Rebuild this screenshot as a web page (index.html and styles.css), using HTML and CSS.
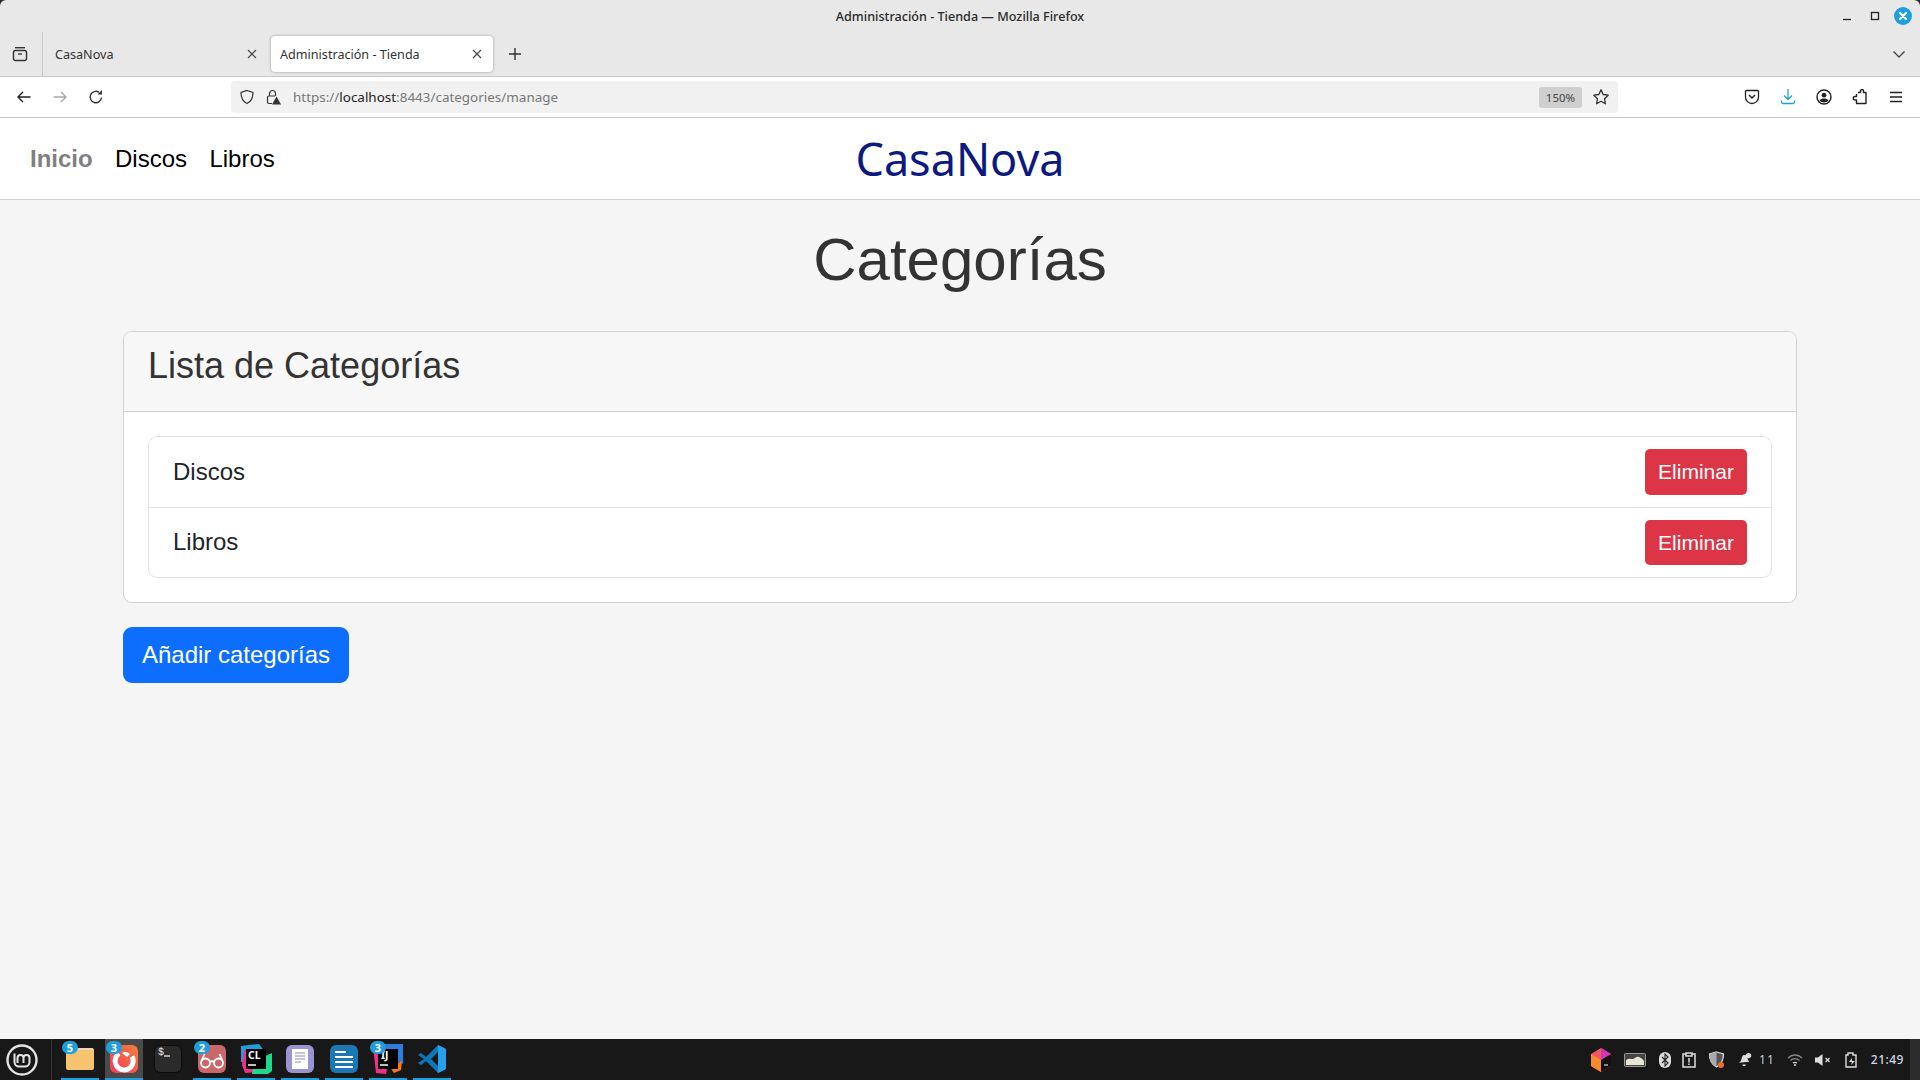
FILE: index.html
```html
<!DOCTYPE html>
<html lang="es">
<head>
    <meta charset="UTF-8" />
    <title>Administración - Tienda</title>
    <link rel="stylesheet" href="styles.css">
</head>
<body>
<div class="window">
    <div class="titlebar">
        <span class="window-title">Administración - Tienda — Mozilla Firefox</span>
        <div class="window-buttons">
            <svg width="14" height="14" viewBox="0 0 14 14"><path d="M3 10.500h8" stroke="#222" stroke-width="1.300"/></svg>
            <svg width="12" height="12" viewBox="0 0 12 12"><rect x="2.500" y="2.500" width="7" height="7" fill="none" stroke="#222" stroke-width="1.300"/></svg>
            <svg class="close-button" width="18" height="18" viewBox="0 0 18 18"><circle cx="9" cy="9" r="9" fill="#1f9ede"/><path d="M6 6l6 6M12 6l-6 6" stroke="#fff" stroke-width="2.200" stroke-linecap="round"/></svg>
        </div>
    </div>

    <div class="tabstrip">
        <div class="tab-view">
            <svg width="18" height="18" viewBox="0 0 18 18" fill="none" stroke="#333" stroke-width="1.400"><path d="M4 2.700h10"/><rect x="2.500" y="5.500" width="13" height="10" rx="2"/><path d="M7 9h4"/></svg>
        </div>
        <div class="tab">
            <span class="tab-label">CasaNova</span>
            <svg class="tab-close" width="12" height="12" viewBox="0 0 12 12"><path d="M2 2l8 8M10 2l-8 8" stroke="#444" stroke-width="1.100"/></svg>
        </div>
        <div class="tab tab-active">
            <span class="tab-label">Administración - Tienda</span>
            <svg class="tab-close" width="12" height="12" viewBox="0 0 12 12"><path d="M2 2l8 8M10 2l-8 8" stroke="#444" stroke-width="1.100"/></svg>
        </div>
        <svg class="tab-new" width="14" height="14" viewBox="0 0 14 14"><path d="M7 1v12M1 7h12" stroke="#333" stroke-width="1.400"/></svg>
        <svg class="tab-list" width="16" height="16" viewBox="0 0 16 16"><path d="M2.500 5.500L8 11l5.500-5.500" fill="none" stroke="#444" stroke-width="1.300"/></svg>
    </div>

    <div class="toolbar">
        <svg class="tool-first" width="16" height="16" viewBox="0 0 16 16" fill="none" stroke="#222" stroke-width="1.400"><path d="M14.500 8H2M7 3L2 8l5 5"/></svg>
        <svg class="tool" width="16" height="16" viewBox="0 0 16 16" fill="none" stroke="#a8a8a8" stroke-width="1.400"><path d="M1.500 8H14M9 3l5 5-5 5"/></svg>
        <svg class="tool" width="16" height="16" viewBox="0 0 16 16" fill="none" stroke="#333" stroke-width="1.400"><path d="M13.500 8.500A5.700 5.700 0 1 1 11 3.300"/><path d="M14 1v4.500H9.500z" fill="#333" stroke="none"/></svg>
        <div class="urlbar">
            <svg width="16" height="16" viewBox="0 0 16 16" fill="none" stroke="#333" stroke-width="1.200"><path d="M8 1.500l6 2c0 5-1.500 9-6 11-4.500-2-6-6-6-11z"/></svg>
            <svg class="lock" width="16" height="16" viewBox="0 0 16 16"><path d="M4.500 7V4.500a3 3 0 0 1 6 0V7M7 14.500H4a1.500 1.500 0 0 1-1.500-1.500V8.500A1.500 1.500 0 0 1 4 7h6" fill="none" stroke="#333" stroke-width="1.200"/><path d="M11.500 7.500L16 15.500H7z" fill="#333"/></svg>
            <span class="url"><span class="url-dim">https://</span><span class="url-host">localhost</span><span class="url-dim">:8443/categories/manage</span></span>
            <span class="zoom-badge">150%</span>
            <svg width="18" height="18" viewBox="0 0 18 18"><path d="M9 1.800l2.200 4.700 5 .7-3.700 3.500.9 5.100L9 13.300l-4.400 2.500.9-5.100L1.800 7.200l5-.7z" fill="none" stroke="#333" stroke-width="1.300" stroke-linejoin="round"/></svg>
        </div>
        <div class="toolbar-right">
            <svg width="16" height="16" viewBox="0 0 16 16" fill="none" stroke="#222" stroke-width="1.300"><path d="M2.500 1.500h11A1 1 0 0 1 14.500 2.500V8a6.500 6.500 0 0 1-13 0V2.500a1 1 0 0 1 1-1z"/><path d="M5 6l3 3 3-3" stroke-width="1.500"/></svg>
            <svg width="16" height="16" viewBox="0 0 16 16" fill="none" stroke="#1f9ede" stroke-width="1.300"><path d="M8 0v10M4 6.500L8 10.500l4-4M1.500 11.500v1.500a1.500 1.500 0 0 0 1.500 1.500h10a1.500 1.500 0 0 0 1.500-1.500v-1.500"/></svg>
            <svg width="16" height="16" viewBox="0 0 16 16"><circle cx="8" cy="8" r="7" fill="none" stroke="#222" stroke-width="1.400"/><circle cx="8" cy="6.200" r="2.400" fill="#222"/><path d="M3.500 11.500c1-1.500 2.700-2 4.500-2s3.500.5 4.500 2c-1 1.300-2.700 2-4.500 2s-3.500-.7-4.500-2z" fill="#222"/></svg>
            <svg width="16" height="16" viewBox="0 0 16 16" fill="none" stroke="#222" stroke-width="1.400" stroke-linejoin="round"><path d="M6 3.500h2.500V2a1.500 1.500 0 0 1 3 0v1.500h2.500V14.500H4.500V11H3a1.700 1.700 0 0 1 0-3.500h1.500V5"/></svg>
            <svg width="16" height="16" viewBox="0 0 16 16"><path d="M2 3.500h12M2 8h12M2 12.500h12" stroke="#222" stroke-width="1.400"/></svg>
        </div>
    </div>

    <nav class="site-nav">
        <div class="nav-links">
            <a class="nav-link nav-current">Inicio</a>
            <a class="nav-link">Discos</a>
            <a class="nav-link">Libros</a>
        </div>
        <div class="brand">CasaNova</div>
    </nav>

    <main class="page">
        <h1>Categorías</h1>
        <section class="card">
            <header class="card-header"><h2>Lista de Categorías</h2></header>
            <div class="card-body">
                <ul class="list-group">
                    <li class="list-item"><span>Discos</span><button class="btn btn-danger">Eliminar</button></li>
                    <li class="list-item"><span>Libros</span><button class="btn btn-danger">Eliminar</button></li>
                </ul>
            </div>
        </section>
        <button class="btn btn-primary">Añadir categorías</button>
    </main>

    <footer class="taskbar">
        <div class="start">
            <svg width="32" height="32" viewBox="0 0 32 32" fill="none" stroke="#e4e4e4"><circle cx="16" cy="16" r="14.500" stroke-width="2.400"/><path d="M8.500 9.500v8.500a4.500 4.500 0 0 0 4.500 4.500h6a4.500 4.500 0 0 0 4.500-4.500v-4a3 3 0 0 0-6 0v5M17.500 14a3 3 0 0 0-6 0v5" stroke-width="2"/></svg>
        </div>
        <div class="launcher">
            <div class="launch-item running">
                <span class="count">5</span>
                <svg width="28" height="22" viewBox="0 0 28 22"><path d="M0 2a2 2 0 0 1 2-2h24a2 2 0 0 1 2 2v6H0z" fill="#ead9b4"/><path d="M0 3h10l2-1h16v18a2 2 0 0 1-2 2H2a2 2 0 0 1-2-2z" fill="#f6c36f"/></svg>
            </div>
            <div class="launch-item running active">
                <span class="count">3</span>
                <svg width="28" height="28" viewBox="0 0 28 28"><defs><linearGradient id="fox" x1="1" y1="0" x2="0" y2="1"><stop offset="0" stop-color="#f7803a"/><stop offset="1" stop-color="#f0385c"/></linearGradient></defs><rect width="28" height="28" rx="6" fill="url(#fox)"/><path d="M9 8.500a9 9 0 1 0 13 3" fill="none" stroke="#fff" stroke-width="5"/><path d="M12 8c3-2 6-1 8 1l-3 3z" fill="#fff"/></svg>
            </div>
            <div class="launch-item">
                <svg width="28" height="28" viewBox="0 0 28 28"><rect x=".5" y=".5" width="27" height="27" rx="6" fill="#2b2b2b" stroke="#0c0c0c"/><text x="4" y="10" class="term-text">$</text><path d="M10 11h6" stroke="#eee" stroke-width="1.300"/></svg>
            </div>
            <div class="launch-item running">
                <span class="count">2</span>
                <svg width="28" height="28" viewBox="0 0 28 28"><rect width="28" height="28" rx="6" fill="#c9686a"/><g fill="none" stroke="#fff" stroke-width="1.800"><circle cx="7.500" cy="18" r="4.500"/><circle cx="20.500" cy="18" r="4.500"/><path d="M12 17c1.300-1 2.700-1 4 0M3.500 16l3-7M24.500 16l-3-7"/></g></svg>
            </div>
            <div class="launch-item running">
                <svg width="32" height="32" viewBox="0 0 32 32"><path d="M1 3l18-2 6 8v10H1z" fill="#1f9ede"/><path d="M2 22l3 8 14-1 7-12-8-10H4z" fill="#f0308c"/><path d="M14 18l18-8v18l-4 3H12z" fill="#1fd98a"/><rect x="6" y="6" width="20" height="20" fill="#000"/><text x="8" y="16" class="ide-text">CL</text><path d="M8 22h8" stroke="#fff" stroke-width="1.500"/></svg>
            </div>
            <div class="launch-item running">
                <svg width="28" height="28" viewBox="0 0 28 28"><rect width="28" height="28" rx="6" fill="#9a94d2"/><rect x="6" y="4" width="16" height="20" fill="#fff"/><path d="M9 8h10M9 11h10M9 14h10M9 17h6" stroke="#8b86c4" stroke-width="1"/></svg>
            </div>
            <div class="launch-item running">
                <svg width="28" height="28" viewBox="0 0 28 28"><rect width="28" height="28" rx="6" fill="#1c78b4"/><path d="M5 7h11M5 12h18M5 17h18M5 22h18" stroke="#fff" stroke-width="2"/></svg>
            </div>
            <div class="launch-item running">
                <span class="count">3</span>
                <svg width="32" height="32" viewBox="0 0 32 32"><path d="M12 1h19v20L20 16z" fill="#2b7de0"/><path d="M1 4l18 2-5 25-10-1z" fill="#f0308c"/><path d="M18 24l12-6-1 9-7 3z" fill="#f77a1a"/><rect x="6" y="6" width="20" height="20" fill="#000"/><text x="9" y="16" class="ide-text">IJ</text><path d="M8 22h8" stroke="#fff" stroke-width="1.500"/></svg>
            </div>
            <div class="launch-item running">
                <svg width="30" height="30" viewBox="0 0 30 30"><path d="M21 1l8 4v20l-8 4L9 17l-5 4-3-2 6-4-6-4 3-2 5 4z" fill="#0f75bc"/><path d="M21 1l8 4v20l-8 4z" fill="#27a0ec"/><path d="M21 8l-7 7 7 7z" fill="#181818"/></svg>
            </div>
        </div>
        <div class="tray">
            <svg width="22" height="26" viewBox="0 0 22 26"><path d="M11 1l10 6v12l-10 6-10-6V7z" fill="#f05a5a"/><path d="M11 1l10 6-10 6z" fill="#d633b8"/><path d="M21 7v12l-10 6V13z" fill="#111"/><path d="M14 18h4" stroke="#fff"/><path d="M1 7l10 6v12l-10-6z" fill="#f78a2a"/></svg>
            <svg width="22" height="14" viewBox="0 0 22 14"><rect x=".5" y=".5" width="21" height="13" rx="1" fill="#444" stroke="#999"/><path d="M2 7c3-2 5-1 7-1s3-3 6-2 4 3 5 4v4H2z" fill="#e8e4d8"/></svg>
            <svg class="tray-bluetooth" width="12" height="16" viewBox="0 0 12 16"><rect width="12" height="16" rx="6" fill="#ddd"/><path d="M3 5l6 6-3 3V2l3 3-6 6" fill="none" stroke="#222" stroke-width="1.100"/></svg>
            <svg width="14" height="16" viewBox="0 0 14 16"><path d="M4 2H1v13h12V2h-3M4 1h6v3H4z" fill="none" stroke="#ddd" stroke-width="1.500"/><path d="M7 6v4.500M7 11.500v1.500" stroke="#ddd" stroke-width="1.500"/></svg>
            <svg width="17" height="18" viewBox="0 0 16 18"><path d="M8 1l7 2c0 6-1.500 10-7 13C2.500 13 1 9 1 3z" fill="#555" stroke="#ddd" stroke-width="1.300"/><path d="M8 1v15C2.500 13 1 9 1 3z" fill="#aaa"/><circle cx="12.500" cy="14" r="3" fill="#f26a2a"/></svg>
            <div class="tray-note">
                <svg width="16" height="16" viewBox="0 0 18 16"><path d="M2 11c3-1 3-5 4-7 1-2 4-2 5 0 1 2 1 4 3 6zM6 13a2 2 0 0 0 4 0" fill="#ddd"/><circle cx="13" cy="3" r="3" fill="#ddd"/></svg>
                <span class="tray-text">11</span>
            </div>
            <svg width="16" height="12" viewBox="0 0 16 12" fill="none" stroke="#888" stroke-width="1.300"><path d="M1 4c4-4 10-4 14 0M3.500 6.500c3-2.500 6-2.500 9 0"/><path d="M6 9c1.500-1 2.500-1 4 0" stroke="#ddd"/><circle cx="8" cy="11" r="1" fill="#ddd" stroke="none"/></svg>
            <svg width="16" height="14" viewBox="0 0 16 14"><path d="M0 4.500h3L7.500 1v12L3 9.500H0z" fill="#ddd"/><path d="M10.500 5l4 4M14.500 5l-4 4" stroke="#ddd" stroke-width="1.300"/></svg>
            <svg class="tray-battery" width="14" height="16" viewBox="0 0 14 16"><path d="M4 1h5v2h3v12H2V3h2z" fill="none" stroke="#ddd" stroke-width="1.400"/><path d="M8 6l-3 4h3l-1 3 4-4H8z" fill="#ddd"/></svg>
            <span class="clock">21:49</span>
        </div>
        <div class="show-desktop"></div>
    </footer>
</div>
</body>
</html>
```

FILE: styles.css
```css
* {
    box-sizing: border-box;
}

body {
    margin: 0;
    font-family: "Liberation Sans", Arial, sans-serif;
    background: #2a2a2a;
    overflow: hidden;
}

.window {
    display: flex;
    flex-direction: column;
    height: 100vh;
}

/* browser chrome */
.titlebar {
    height: 32px;
    background: #e8e8e8;
    display: flex;
    align-items: center;
    justify-content: center;
    position: relative;
    border-radius: 6px 6px 0 0;
}

.window-title {
    font-family: "Noto Sans", sans-serif;
    font-size: 12.600px;
    font-weight: 500;
    color: #2a2a2a;
}

.window-buttons {
    position: absolute;
    right: 8px;
    top: 7px;
    display: flex;
    align-items: center;
    gap: 15px;
}

.close-button {
    margin-left: -2px;
}

.tabstrip {
    height: 45px;
    background: #e8e8e8;
    border-bottom: 1px solid #c8c8c8;
    display: flex;
    align-items: center;
    font-family: "Noto Sans", sans-serif;
    font-size: 12.600px;
    color: #333;
}

.tab-view {
    width: 43px;
    height: 44px;
    border-right: 1px solid #c8c8c8;
    display: flex;
    align-items: center;
    padding-left: 11px;
}

.tab {
    width: 222px;
    height: 36px;
    margin-left: 1px;
    padding: 0 8px 0 11px;
    display: flex;
    align-items: center;
    justify-content: space-between;
    border-radius: 4px;
}

.tab-active {
    width: 222px;
    margin-left: 5px;
    padding-left: 9px;
    padding-right: 10px;
    background: #fff;
    box-shadow: 0 0 3px rgba(0, 0, 0, 0.35);
}

.tab-new {
    margin-left: 15px;
}

.tab-list {
    margin-left: auto;
    margin-right: 13px;
}

.toolbar {
    height: 41px;
    background: #fff;
    border-bottom: 1px solid #c8c8c8;
    display: flex;
    align-items: center;
}

.tool-first {
    margin-left: 16px;
}

.tool {
    margin-left: 20px;
}

.urlbar {
    width: 1387px;
    height: 32px;
    margin-left: 127px;
    padding: 0 8px 0 8px;
    background: #f1f1f1;
    border-radius: 4px;
    display: flex;
    align-items: center;
    font-family: "Noto Sans", sans-serif;
    font-size: 13.450px;
}

.lock {
    margin-left: 10px;
}

.url {
    margin-left: 12px;
    flex: 1;
}

.url-dim {
    color: #777;
}

.url-host {
    color: #222;
}

.zoom-badge {
    width: 43px;
    height: 21px;
    margin-right: 10px;
    background: #cfcfcf;
    border-radius: 3px;
    color: #444;
    font-size: 11.500px;
    line-height: 21px;
    text-align: center;
}

.toolbar-right {
    margin-left: auto;
    margin-right: 16px;
    display: flex;
    align-items: center;
    gap: 20px;
}

/* site */
.site-nav {
    height: 82px;
    background: #fff;
    border-bottom: 1px solid #d0d0d0;
    display: flex;
    align-items: center;
    position: relative;
    flex-shrink: 0;
}

.nav-links {
    display: flex;
    padding-left: 18.800px;
}

.nav-link {
    padding: 0 11.200px;
    font-size: 24px;
    color: #000;
}

.nav-current {
    color: #808080;
    font-weight: 700;
}

.brand {
    position: absolute;
    left: 0;
    right: 0;
    text-align: center;
    font-family: "Noto Sans", sans-serif;
    font-size: 45px;
    color: #0a1a80;
    pointer-events: none;
}

.page {
    flex: 1;
    padding: 0 123px;
    background: #f5f5f5;
}

h1 {
    margin: 24px 0 35px;
    font-size: 60px;
    font-weight: 400;
    line-height: 72px;
    text-align: center;
    color: #333;
}

.card {
    background: #fff;
    border: 1px solid #d2d2d2;
    border-radius: 9px;
    overflow: hidden;
}

.card-header {
    height: 80px;
    padding: 12px 24px;
    background: #f7f7f7;
    border-bottom: 1px solid #d2d2d2;
}

h2 {
    margin: 0;
    font-size: 36px;
    font-weight: 400;
    line-height: 43px;
    color: #333;
}

.card-body {
    padding: 24px;
}

.list-group {
    margin: 0;
    padding: 0;
    list-style: none;
    border: 1px solid #dee2e6;
    border-radius: 9px;
}

.list-item {
    height: 70px;
    padding: 0 24px;
    display: flex;
    align-items: center;
    justify-content: space-between;
    font-size: 24px;
    color: #212529;
}

.list-item + .list-item {
    border-top: 1px solid #dee2e6;
}

.list-item + .list-item span {
    margin-bottom: 2px;
}

.list-item + .list-item .btn-danger {
    height: 45px;
}

.btn {
    border: none;
    color: #fff;
    font-family: inherit;
}

.btn-danger {
    width: 102px;
    height: 46px;
    background: #dc3545;
    border-radius: 5px;
    font-size: 21px;
}

.btn-primary {
    width: 226px;
    height: 56px;
    margin-top: 24px;
    background: #0d6efd;
    border-radius: 9px;
    font-size: 24px;
}

/* desktop panel */
.taskbar {
    height: 41px;
    background: #181818;
    display: flex;
    align-items: center;
    flex-shrink: 0;
}

.start {
    width: 52px;
    height: 41px;
    padding: 5px 0 0 6px;
    border-right: 1px solid #333;
    flex-shrink: 0;
}

.launcher {
    display: flex;
    height: 41px;
    margin-left: 9px;
    gap: 6px;
}

.launch-item {
    width: 38px;
    height: 41px;
    display: flex;
    align-items: center;
    justify-content: center;
    position: relative;
    border-bottom: 2px solid transparent;
}

.running {
    border-bottom-color: #1f9ede;
}

.active {
    background: #4a4a4a;
}

.count {
    position: absolute;
    left: 1px;
    top: 2px;
    width: 16px;
    height: 13px;
    background: #1f9ede;
    border-radius: 7px;
    color: #fff;
    font-family: "Noto Sans", sans-serif;
    font-size: 11px;
    font-weight: 700;
    line-height: 13px;
    text-align: center;
    z-index: 1;
}

.term-text {
    font-family: "Liberation Mono", monospace;
    font-size: 10px;
    fill: #eee;
}

.ide-text {
    font-family: "Noto Sans", sans-serif;
    font-size: 10.500px;
    font-weight: 700;
    fill: #fff;
}

.tray {
    margin-left: auto;
    display: flex;
    align-items: center;
    gap: 12px;
    color: #ddd;
    font-family: "Noto Sans", sans-serif;
    font-size: 12px;
}

.tray-bluetooth {
    margin-left: 1px;
    margin-right: -1px;
}

.tray-note {
    display: flex;
    align-items: center;
    gap: 6px;
}

.tray-text {
    letter-spacing: 1px;
    color: #bcd;
}

.tray-battery {
    margin-left: 1px;
}

.clock {
    margin-left: 1px;
    letter-spacing: 0.500px;
    font-weight: 500;
    color: #cdd8e4;
}

.show-desktop {
    width: 10px;
    height: 41px;
    margin-left: 6px;
    background: #2c2c2c;
}
```
